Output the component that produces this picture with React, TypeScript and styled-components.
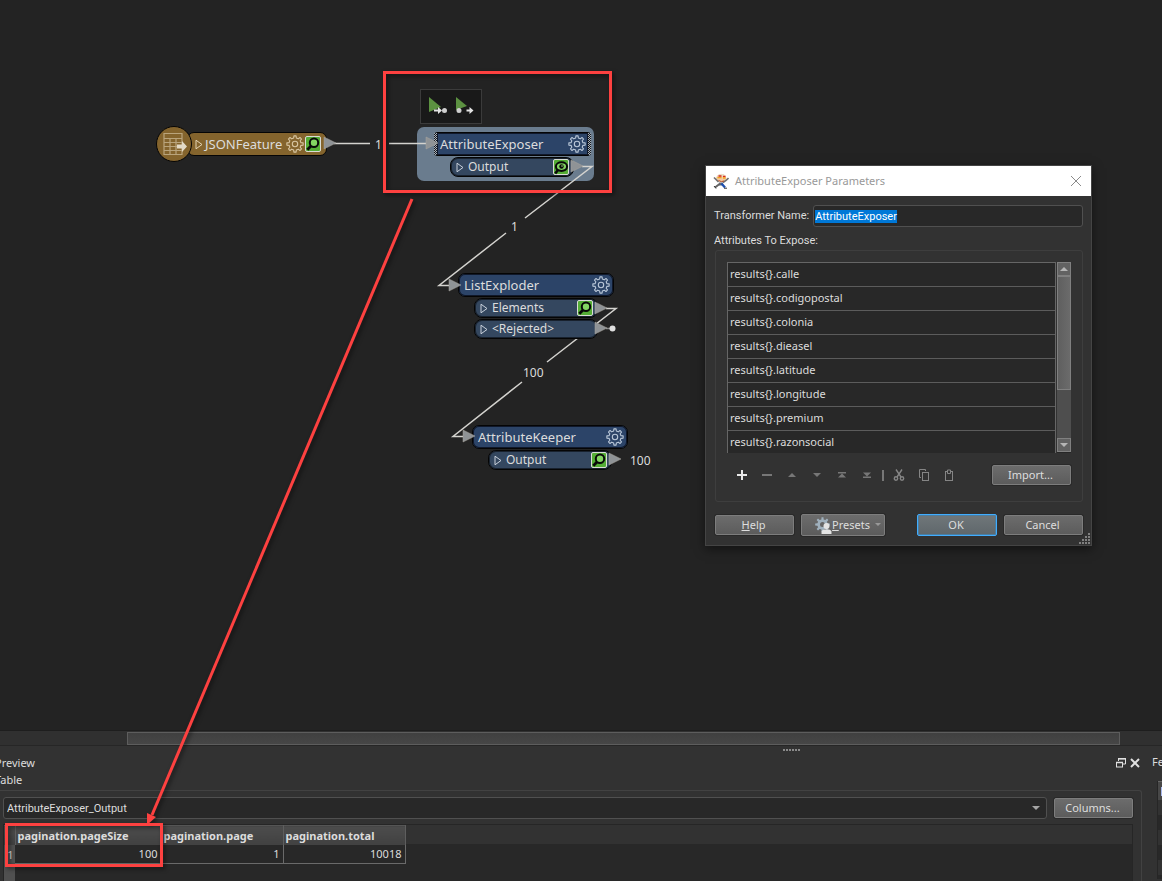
import React, { useEffect, useRef } from "react";
import styled, { createGlobalStyle, css } from "styled-components";

const uiFont = '"Noto Sans", "Open Sans", sans-serif';
const compactFont = 'Roboto, "Noto Sans", sans-serif';
const wire = "#d4d3cf";
const port = "#8f9396";

const GlobalStyle = createGlobalStyle`
  *, *::before, *::after { box-sizing: border-box; }
  body { margin: 0; background: #232323; color: #dcdcdc; font-family: ${uiFont}; font-size: 11px; line-height: 16px; }
  button, input, select { font: inherit; color: inherit; }
`;

const Workbench = styled.main`
  position: relative;
  display: flex;
  flex-direction: column;
  height: 100vh;
  overflow: hidden;
`;

const Canvas = styled.section`
  position: relative;
  flex: 1;
  min-height: 0;
  overflow: hidden;
  background: #232323;
`;

const Layer = styled.svg`
  position: absolute;
  inset: 0;
  width: 100%;
  height: 100%;
  pointer-events: none;
`;

const Annotations = styled(Layer)`
  filter: drop-shadow(2px 2px 2px rgba(0, 0, 0, 0.5));
`;

const Halo = styled.div`
  position: absolute;
  left: 417px;
  top: 127px;
  width: 177px;
  height: 54px;
  border-radius: 7px;
  background: #6a7c8e;
`;

const RunBar = styled.div`
  position: absolute;
  left: 420px;
  top: 89px;
  display: flex;
  gap: 4px;
  padding: 5px 6px 6px;
  border: 1px solid #3b3b3b;
  background: #191919;
`;

const RunButton = styled.button`
  display: flex;
  width: 22px;
  height: 22px;
  padding: 0;
  border: 0;
  background: none;
`;

const NodeBox = styled.article<{ $x: number; $y: number; $width: number }>`
  position: absolute;
  left: ${(p) => p.$x}px;
  top: ${(p) => p.$y}px;
  width: ${(p) => p.$width}px;
`;

const NodeHeader = styled.div<{ $kind?: "reader"; $selected?: boolean }>`
  display: flex;
  align-items: center;
  gap: 2px;
  height: 24px;
  padding: 0 3px 0 4px;
  border: 1px solid #050505;
  border-radius: 7px;
  background: #2c4468;
  font-size: 13px;
  line-height: 20px;
  box-shadow: inset 0 0 0 1px #10182a;
  ${(p) =>
    p.$kind === "reader" &&
    css`
      gap: 1px;
      padding: 0 5px 0 7px;
      background: #84642d;
      box-shadow: none;
    `}
  ${(p) =>
    p.$selected &&
    css`
      padding: 0 2px;
      border-width: 1px 3px;
      border-color: #050505 transparent;
      border-radius: 3px;
      background: linear-gradient(#2c4468, #2c4468) padding-box,
        repeating-conic-gradient(#a9b1ba 0 25%, #14181e 0 50%) 0 0 / 2px 2px border-box;
    `}
`;

const NodeName = styled.span`
  flex: 1;
  padding: 0 0 1px 1px;
  white-space: nowrap;
`;

const PortRow = styled.div`
  display: flex;
  align-items: center;
  gap: 3px;
  width: 124px;
  height: 20px;
  margin: 1px 0 0 16px;
  padding: 0 4px 0 5px;
  border: 1px solid #050505;
  border-radius: 8px;
  background: #34475f;
  box-shadow: inset 0 0 0 1px #18212d;
  font-size: 12px;
`;

const ReaderDisc = styled.div`
  position: absolute;
  left: 156px;
  top: 126px;
  display: flex;
  align-items: center;
  justify-content: center;
  width: 36px;
  height: 36px;
  border: 1px solid #050505;
  border-radius: 50%;
  background: #84642d;
`;

const Count = styled.span<{ $x: number; $y: number }>`
  position: absolute;
  left: ${(p) => p.$x}px;
  top: ${(p) => p.$y}px;
  font-size: 12px;
`;

/* Dialog */
const Dialog = styled.form`
  position: absolute;
  left: 705px;
  top: 165px;
  width: 387px;
  border: 1px solid #444;
  background: #323232;
  box-shadow: 0 3px 10px rgba(0, 0, 0, 0.5);
`;

const TitleBar = styled.header`
  display: flex;
  align-items: center;
  gap: 6px;
  height: 30px;
  padding: 0 9px 0 7px;
  background: #fff;
  color: #999;
`;

const DialogTitle = styled.h2`
  flex: 1;
  margin: 0;
  font-size: 11px;
  font-weight: 400;
`;

const IconButton = styled.button`
  display: flex;
  padding: 0;
  border: 0;
  background: none;
`;

const DialogBody = styled.div`
  padding: 9px 8px;
`;

const NameRow = styled.div`
  display: flex;
  align-items: center;
  gap: 4px;
  font-family: ${compactFont};
`;

const NameInput = styled.input`
  flex: 1;
  min-width: 0;
  height: 22px;
  padding: 0 1px;
  border: 1px solid #505050;
  border-radius: 3px;
  background: #282828;
  outline: none;
  &::selection {
    background: #0078d7;
    color: #fff;
  }
`;

const ExposeLabel = styled.div`
  margin: 6px 0 1px;
  font-family: ${compactFont};
`;

const GroupBox = styled.div`
  margin-left: 1px;
  padding: 11px 11px 16px;
  border: 1px solid #3e3e3e;
  border-radius: 3px;
`;

const ListFrame = styled.div`
  display: flex;
  gap: 1px;
  height: 191px;
  overflow: hidden;
`;

const AttributeList = styled.ul`
  flex: 1;
  margin: 0;
  padding: 0;
  list-style: none;
  border: solid #666;
  border-width: 1px 1px 0;
  background: #282828;
`;

const AttributeItem = styled.li`
  height: 24px;
  padding: 3px 2px;
  border-bottom: 1px solid #5c5c5c;
`;

const ScrollColumn = styled.div`
  display: flex;
  flex-direction: column;
  width: 14px;
  border: 1px solid #262626;
  border-width: 0 0 1px;
  background: #4e4e4e;
`;

const ScrollButton = styled.button`
  display: flex;
  align-items: center;
  justify-content: center;
  height: 14px;
  padding: 0;
  border: 1px solid #808080;
  background: #626262;
`;

const ScrollThumb = styled.div`
  height: 114px;
  margin-bottom: auto;
  border: 1px solid #808080;
  background: linear-gradient(90deg, #5f5f5f, #6b6b6b);
`;

const ListTools = styled.div`
  display: flex;
  align-items: center;
  margin-top: 12px;
`;

const ToolStrip = styled.div`
  display: flex;
  align-items: center;
  flex: 1;
  padding-left: 2px;
`;

const ToolButton = styled.button`
  display: flex;
  align-items: center;
  justify-content: center;
  width: 25px;
  height: 20px;
  padding: 0;
  border: 0;
  background: none;
`;

const Divider = styled.span`
  width: 2px;
  height: 11px;
  margin: 0 2px 0 3px;
  background: #777;
`;

const PushButton = styled.button<{ $primary?: boolean; $tall?: boolean }>`
  display: flex;
  align-items: center;
  justify-content: center;
  width: ${(p) => (p.$tall ? 84 : p.$primary ? 80 : 79)}px;
  height: ${(p) => (p.$tall || p.$primary ? 22 : 20)}px;
  padding: 0 2px 0 0;
  border: 1px solid #7d7d7d;
  border-radius: 2px;
  background: linear-gradient(#6c6c6c, #5c5c5c);
  color: #dedede;
  box-shadow: 0 0 0 1px #292929;
  ${(p) =>
    p.$tall &&
    css`
      justify-content: flex-end;
    `}
  ${(p) =>
    p.$primary &&
    css`
      border-color: #41adff;
      background: linear-gradient(#70777a, #5f676b);
      box-shadow: inset 0 0 0 1px #4c7d9f;
    `}
`;

const ButtonRow = styled.footer`
  display: flex;
  align-items: center;
  gap: 7px;
  margin-top: 12px;
  padding-left: 1px;
`;

const Spacer = styled.span`
  flex: 1;
`;

const Grip = styled.svg`
  position: absolute;
  right: 0;
  bottom: 0;
`;

/* Lower dock */
const CanvasScroll = styled.div`
  height: 16px;
  padding: 1px 42px 1px 127px;
  border-top: 1px solid #1e1e1e;
  border-bottom: 1px solid #262626;
  background: #303030;
`;

const CanvasThumb = styled.div`
  height: 13px;
  border: 1px solid #5d5d5d;
  background: linear-gradient(#404040, #464646);
`;

const Splitter = styled.div`
  display: flex;
  justify-content: center;
  height: 8px;
  padding: 3px 0 0 421px;
  background: #323232;
`;

const Dock = styled.section`
  display: flex;
  background: #323232;
`;

const PreviewPane = styled.div`
  flex: 1;
  min-width: 0;
`;

const PaneHeading = styled.div`
  display: flex;
  align-items: center;
  gap: 4px;
  height: 17px;
  padding-right: 2px;
`;

const PaneTitle = styled.h2`
  flex: 1;
  margin: 0;
  overflow: hidden;
  text-indent: -5px;
  font-size: 11px;
  font-weight: 400;
`;

const PreviewGroup = styled.div`
  margin-top: 2px;
  padding: 6px 8px 0 3px;
  border: solid #424242;
  border-width: 1px 1px 0 0;
  border-radius: 0 3px 0 0;
`;

const SourceRow = styled.div`
  display: flex;
  align-items: center;
  gap: 7px;
`;

const SelectWrap = styled.div`
  position: relative;
  flex: 1;
`;

const SourceSelect = styled.select`
  display: block;
  width: 100%;
  height: 22px;
  padding: 1px 3px 0;
  appearance: none;
  border: 1px solid #505050;
  border-radius: 3px;
  background: #282828;
  font-family: ${compactFont};
`;

const SelectArrow = styled.svg`
  position: absolute;
  right: 7px;
  top: 9px;
  pointer-events: none;
`;

const TableFrame = styled.div`
  height: 57px;
  margin-top: 5px;
  overflow: hidden;
  border: 1px solid #262626;
  border-bottom: 0;
  background: linear-gradient(#323232 19px, #282828 19px);
`;

const DataTable = styled.table`
  border-collapse: collapse;
  table-layout: fixed;
  width: 401px;
  line-height: 15px;
`;

const ColumnHead = styled.th`
  height: 19px;
  padding: 0 2px;
  border-right: 1px solid #5e5e5e;
  border-top: 1px solid #555;
  background: linear-gradient(#4c4c4c, #414141);
  font-weight: 700;
  text-align: left;
`;

const RowHead = styled.th`
  height: 19px;
  padding: 0 0 0 2px;
  background: #505050;
  font-weight: 400;
`;

const Cell = styled.td`
  padding: 0 3px;
  border-right: 1px solid #6a6a6a;
  border-bottom: 1px solid #6a6a6a;
  text-align: right;
`;

const InfoPane = styled.aside`
  width: 20px;
  padding-left: 10px;
  overflow: hidden;
  white-space: nowrap;
`;

const InfoList = styled.div`
  height: 98px;
  margin: 11px 0 0 5px;
  border-left: 1px solid #262626;
  background: repeating-linear-gradient(#323232 0 15px, #282828 15px 30px) 0 19px no-repeat;
`;

const InfoHead = styled.div`
  height: 19px;
  border-top: 1px solid #666;
  background: linear-gradient(#a9b9ee, #a9b9ee) 3px 5px / 1px 9px no-repeat #484848;
`;

function gearPath(c: number, outer: number, inner: number, teeth: number) {
  const step = (Math.PI * 2) / teeth;
  const at = (r: number, a: number) => `${(c + r * Math.cos(a)).toFixed(2)} ${(c + r * Math.sin(a)).toFixed(2)}`;
  let d = "";
  for (let i = 0; i < teeth; i++) {
    const a = i * step - Math.PI / 2;
    d += `${i ? "L" : "M"}${at(inner, a - step * 0.28)}L${at(outer, a - step * 0.17)}L${at(outer, a + step * 0.17)}L${at(inner, a + step * 0.28)}`;
  }
  return d + "Z";
}

const Gear = ({ color = "#b9c7d8" }: { color?: string }) => (
  <svg width="18" height="18" viewBox="0 0 18 18" fill="none" stroke={color} strokeWidth="1.1" strokeLinejoin="round">
    <path d={gearPath(9, 8.2, 6.1, 8)} />
    <circle cx="9" cy="9" r="2.7" />
  </svg>
);

const Inspect = ({ eye }: { eye?: boolean }) => (
  <svg width="16" height="16" viewBox="0 0 16 16">
    <rect x="0.5" y="0.5" width="15" height="15" rx="1.5" fill="#54ad35" stroke="#d9dcd5" />
    {eye ? (
      <>
        <path d="M2.2 14.500 5 11" stroke="#080808" strokeWidth="2.600" />
        <ellipse cx="8.500" cy="7.600" rx="5.600" ry="4.300" fill="#7fd060" stroke="#080808" strokeWidth="2" />
        <circle cx="8.500" cy="7.500" r="2.200" fill="#080808" />
        <circle cx="9" cy="7" r="0.800" fill="#9fe083" />
      </>
    ) : (
      <>
        <path d="M2.300 13.700 6 10" stroke="#080808" strokeWidth="2.800" />
        <circle cx="9" cy="6.800" r="4.200" fill="#83d662" stroke="#080808" strokeWidth="2" />
      </>
    )}
  </svg>
);

const Expand = ({ color = "#c9d1dc" }: { color?: string }) => (
  <svg width="8" height="11" viewBox="0 0 8 11" fill="none" stroke={color}>
    <path d="M1 1.200v8.600l6-4.300z" />
  </svg>
);

const Mascot = () => (
  <svg width="16" height="16" viewBox="0 0 16 16">
    <path d="M3 5.500Q4 .5 9 1q4 .5 4.500 5l-3 3-6-.5z" fill="#f3c9a0" />
    <path d="M4 3.500Q6 .4 9 .9q3.500 .5 4 2.600z" fill="#e8dfc8" />
    <path d="M5.500 3h3M10 3.500h2.500" stroke="#d92a1c" strokeWidth="1.500" />
    <path d="M4.500 4.700h4M10 5h2.500" stroke="#f0a51c" strokeWidth="1.300" />
    <path d="M1 4.500 3.500 7l2 2M15.500 5 13 7.500l-3 2" fill="none" stroke="#6f6f6f" strokeWidth="1.600" />
    <path d="M5.500 7.500q3 2 5.500 .500" fill="none" stroke="#b5502e" />
    <path d="M6 9.500h4l-1 3H6z" fill="#626b79" />
    <path d="M6.500 11 2 14.500" stroke="#636363" strokeWidth="2" />
    <path d="M8.500 10.500 12 14.500" stroke="#1d4fb0" strokeWidth="2.300" />
    <path d="m1 13 2 2.500M11 15.200h3" stroke="#333" />
  </svg>
);

const tools: { label: string; art: React.ReactNode }[] = [
  { label: "Add", art: <path d="M6 1v10M1 6h10" stroke="#e8e8e8" strokeWidth="2" /> },
  { label: "Remove", art: <path d="M1 6h10" stroke="#777" strokeWidth="2" /> },
  { label: "Move up", art: <path d="M2 8h8L6 4z" fill="#777" /> },
  { label: "Move down", art: <path d="M2 4h8L6 8z" fill="#777" /> },
  { label: "Move to top", art: <path d="M2 3h8v1.500H2zM2 8.500h8L6 4.500z" fill="#777" /> },
  { label: "Move to bottom", art: <path d="M2 9h8V7.500H2zM2 3.500h8L6 7.500z" fill="#777" /> },
];

const editTools: { label: string; art: React.ReactNode }[] = [
  {
    label: "Cut",
    art: (
      <g fill="none" stroke="#858585" strokeWidth="1.400">
        <path d="M3 .5 8 8M9 .5 4 8" />
        <circle cx="3" cy="9.500" r="1.700" />
        <circle cx="9" cy="9.500" r="1.700" />
      </g>
    ),
  },
  {
    label: "Copy",
    art: (
      <g fill="none" stroke="#858585">
        <path d="M3 8.500H1.500v-8h6V2" />
        <rect x="4.500" y="3.500" width="6" height="8" />
      </g>
    ),
  },
  {
    label: "Paste",
    art: (
      <g fill="none" stroke="#858585">
        <rect x="2.500" y="2.500" width="7" height="9" />
        <path d="M4.500 4.500V1h3v3.500z" fill="#323232" />
      </g>
    ),
  },
];

const attributes = ["calle", "codigopostal", "colonia", "dieasel", "latitude", "longitude", "premium", "razonsocial"];

const ToolItem = ({ label, art }: { label: string; art: React.ReactNode }) => (
  <ToolButton type="button" aria-label={label}>
    <svg width="12" height="12" viewBox="0 0 12 12">{art}</svg>
  </ToolButton>
);

interface TransformerProps {
  name: string;
  x: number;
  y: number;
  width: number;
  selected?: boolean;
  ports: { name: string; icon?: "lens" | "eye" }[];
}

const Transformer = ({ name, x, y, width, selected, ports }: TransformerProps) => (
  <NodeBox $x={x} $y={y} $width={width}>
    <NodeHeader $selected={selected}>
      <NodeName>{name}</NodeName>
      <Gear />
    </NodeHeader>
    {ports.map((p) => (
      <PortRow key={p.name}>
        <Expand />
        <NodeName>{p.name}</NodeName>
        {p.icon && <Inspect eye={p.icon === "eye"} />}
      </PortRow>
    ))}
  </NodeBox>
);

const PortMark = ({ x, y }: { x: number; y: number }) => (
  <path d={`M${x} ${y - 6}v12l12-6z`} fill={port} stroke="#aaa69f" strokeWidth="0.5" />
);

const ParametersDialog = () => {
  const nameRef = useRef<HTMLInputElement>(null);
  useEffect(() => {
    nameRef.current?.focus();
    nameRef.current?.select();
  }, []);
  return (
    <Dialog onSubmit={(e) => e.preventDefault()}>
      <TitleBar>
        <Mascot />
        <DialogTitle>AttributeExposer Parameters</DialogTitle>
        <IconButton type="button" aria-label="Close">
          <svg width="12" height="12" viewBox="0 0 12 12" stroke="#8a8a8a">
            <path d="m1 1 10 10M11 1 1 11" />
          </svg>
        </IconButton>
      </TitleBar>
      <DialogBody>
        <NameRow>
          <label htmlFor="transformer-name">Transformer Name:</label>
          <NameInput id="transformer-name" ref={nameRef} defaultValue="AttributeExposer" />
        </NameRow>
        <ExposeLabel>Attributes To Expose:</ExposeLabel>
        <GroupBox>
          <ListFrame>
            <AttributeList>
              {attributes.map((a) => (
                <AttributeItem key={a}>{`results{}.${a}`}</AttributeItem>
              ))}
            </AttributeList>
            <ScrollColumn>
              <ScrollButton type="button" aria-label="Scroll up">
                <svg width="8" height="4" viewBox="0 0 8 4"><path d="M0 4h8L4 0z" fill="#b5b5b5" /></svg>
              </ScrollButton>
              <ScrollThumb />
              <ScrollButton type="button" aria-label="Scroll down">
                <svg width="8" height="4" viewBox="0 0 8 4"><path d="M0 0h8L4 4z" fill="#b5b5b5" /></svg>
              </ScrollButton>
            </ScrollColumn>
          </ListFrame>
          <ListTools>
            <ToolStrip>
              {tools.map((t) => <ToolItem key={t.label} {...t} />)}
              <Divider />
              {editTools.map((t) => <ToolItem key={t.label} {...t} />)}
            </ToolStrip>
            <PushButton type="button">Import...</PushButton>
          </ListTools>
        </GroupBox>
        <ButtonRow>
          <PushButton type="button"><span><u>H</u>elp</span></PushButton>
          <PushButton type="button" $tall>
            <svg width="17" height="17" viewBox="0 0 17 17">
              <path d={gearPath(7.5, 7.4, 5.2, 8)} fill="#9fb0bd" />
              <circle cx="7.500" cy="7.500" r="2.500" fill="#666" />
              <circle cx="11.500" cy="9" r="3" fill="#e4e4e4" />
              <path d="M6.500 17v-2q0-2 3-2.500h4q3 .5 3 2.500v2z" fill="#e4e4e4" />
            </svg>
            <span><u>P</u>resets</span>
            <svg width="12" height="8" viewBox="0 0 12 8"><path d="M5 2h6L8 5z" fill="#999" /></svg>
          </PushButton>
          <Spacer />
          <PushButton type="submit" $primary>OK</PushButton>
          <PushButton type="button">Cancel</PushButton>
        </ButtonRow>
      </DialogBody>
      <Grip width="12" height="12" viewBox="0 0 12 12" fill="#808080">
        {[0, 1, 2, 3].map((r) =>
          [0, 1, 2, 3].filter((c) => c >= 3 - r).map((c) => <rect key={`${r}${c}`} x={c * 3} y={r * 3} width="2" height="2" />)
        )}
      </Grip>
    </Dialog>
  );
};

const columns = ["pagination.pageSize", "pagination.page", "pagination.total"];
const values = ["100", "1", "10018"];

export default function App() {
  return (
    <>
      <GlobalStyle />
      <Workbench>
        <Canvas>
          <Halo />
          <Layer fill="none" stroke={wire} strokeWidth="1.5">
            <path d="M334 143.500H370M389 143.500H427" />
            <path d="M582 166.500H592L525 218M506 233 439 285.500H452" />
            <path d="M606 308.500H616L547 362M522 382 453 436.500H465" />
            <path d="M606 328.500H612" stroke="#888" />
          </Layer>
          <NodeBox $x={187} $y={132} $width={140}>
            <NodeHeader $kind="reader">
              <Expand color="#e3d3b4" />
              <NodeName>JSONFeature</NodeName>
              <Gear color="#d8c6a2" />
              <Inspect />
            </NodeHeader>
          </NodeBox>
          <ReaderDisc>
            <svg width="26" height="24" viewBox="0 0 26 24" fill="none" stroke="#b9a47c" strokeWidth="1.200">
              <path d="M3 1.500h18v21H3zM3 6.500h18M3 10.500h18M3 14.500h18M3 18.500h18M9 6.500v16M15 6.500v16" />
              <path d="M16 12.500h5V9l5 5.500-5 5.500v-3.500h-5z" fill="#e3dac6" stroke="none" />
            </svg>
          </ReaderDisc>
          <RunBar>
            <RunButton aria-label="Run to this">
              <svg width="22" height="22" viewBox="0 0 22 22">
                <path d="M2 2v15L14 12z" fill="#5c9141" />
                <path d="M7 14.500h4V12l4 3.500-4 3.500v-2.500H7z" fill="#e4e4e4" />
                <circle cx="17.500" cy="15.500" r="2.500" fill="#cfcfcf" />
              </svg>
            </RunButton>
            <RunButton aria-label="Run from this">
              <svg width="22" height="22" viewBox="0 0 22 22">
                <path d="M3 2v13L14 11z" fill="#5c9141" />
                <circle cx="6" cy="15.500" r="2.500" fill="#cfcfcf" />
                <path d="M13.500 14.500h3V12l4 3.500-4 3.500v-2.500h-3z" fill="#e4e4e4" />
              </svg>
            </RunButton>
          </RunBar>
          <Transformer name="AttributeExposer" x={434} y={132} width={157} selected ports={[{ name: "Output", icon: "eye" }]} />
          <Transformer name="ListExploder" x={458} y={273} width={156} ports={[{ name: "Elements", icon: "lens" }, { name: "<Rejected>" }]} />
          <Transformer name="AttributeKeeper" x={472} y={425} width={156} ports={[{ name: "Output", icon: "lens" }]} />
          <Layer>
            <PortMark x={324} y={143} />
            <PortMark x={426} y={143} />
            <PortMark x={571} y={166} />
            <PortMark x={449} y={285} />
            <PortMark x={595} y={308} />
            <PortMark x={595} y={328} />
            <PortMark x={463} y={436} />
            <PortMark x={609} y={459} />
            <circle cx="612.500" cy="328.500" r="3" fill="#e0e0e0" />
          </Layer>
          <Count $x={375} $y={137}>1</Count>
          <Count $x={511} $y={219}>1</Count>
          <Count $x={523} $y={365}>100</Count>
          <Count $x={630} $y={453}>100</Count>
          <ParametersDialog />
        </Canvas>

        <CanvasScroll><CanvasThumb /></CanvasScroll>
        <Splitter>
          <svg width="17" height="3" viewBox="0 0 17 3" fill="#8a8a8a">
            {[0, 3, 6, 9, 12, 15].map((x) => <rect key={x} x={x} width="2" height="2" />)}
          </svg>
        </Splitter>
        <Dock>
          <PreviewPane>
            <PaneHeading>
              <PaneTitle>Preview</PaneTitle>
              <IconButton aria-label="Float panel">
                <svg width="10" height="10" viewBox="0 0 10 10" fill="none" stroke="#e0e0e0">
                  <path d="M2.500 3V1h7v5H7" />
                  <path d="M2 .5h8M0 4.500h7" strokeWidth="1.500" />
                  <rect x="0.500" y="4.500" width="6" height="4.500" />
                </svg>
              </IconButton>
              <IconButton aria-label="Close panel">
                <svg width="10" height="10" viewBox="0 0 10 10" stroke="#e0e0e0" strokeWidth="2">
                  <path d="m1 1 8 8M9 1 1 9" />
                </svg>
              </IconButton>
            </PaneHeading>
            <PaneHeading><PaneTitle as="h3">Table</PaneTitle></PaneHeading>
            <PreviewGroup>
              <SourceRow>
                <SelectWrap>
                  <SourceSelect aria-label="Table source"><option>AttributeExposer_Output</option></SourceSelect>
                  <SelectArrow width="8" height="4" viewBox="0 0 8 4"><path d="M0 0h8L4 4z" fill="#a5a5a5" /></SelectArrow>
                </SelectWrap>
                <PushButton type="button">Columns...</PushButton>
              </SourceRow>
              <TableFrame>
                <DataTable>
                  <colgroup><col width="11" /><col width="146" /><col width="122" /><col width="122" /></colgroup>
                  <thead>
                    <tr>
                      <ColumnHead aria-label="Row" />
                      {columns.map((c) => <ColumnHead key={c} scope="col">{c}</ColumnHead>)}
                    </tr>
                  </thead>
                  <tbody>
                    <tr>
                      <RowHead scope="row">1</RowHead>
                      {values.map((v) => <Cell key={v}>{v}</Cell>)}
                    </tr>
                    <tr><RowHead aria-label="Empty" /><td colSpan={3} /></tr>
                  </tbody>
                </DataTable>
              </TableFrame>
            </PreviewGroup>
          </PreviewPane>
          <InfoPane>
            Fe
            <InfoList><InfoHead /></InfoList>
          </InfoPane>
        </Dock>

        <Annotations fill="none" stroke="#fd4140" strokeWidth="3">
          <rect x="384.500" y="72.500" width="226" height="119" />
          <rect x="6.500" y="824.500" width="155" height="41" />
          <path d="M412 199 152 815" />
          <path d="M147 825V813l9 4z" fill="#fd4140" stroke="none" />
        </Annotations>
      </Workbench>
    </>
  );
}
